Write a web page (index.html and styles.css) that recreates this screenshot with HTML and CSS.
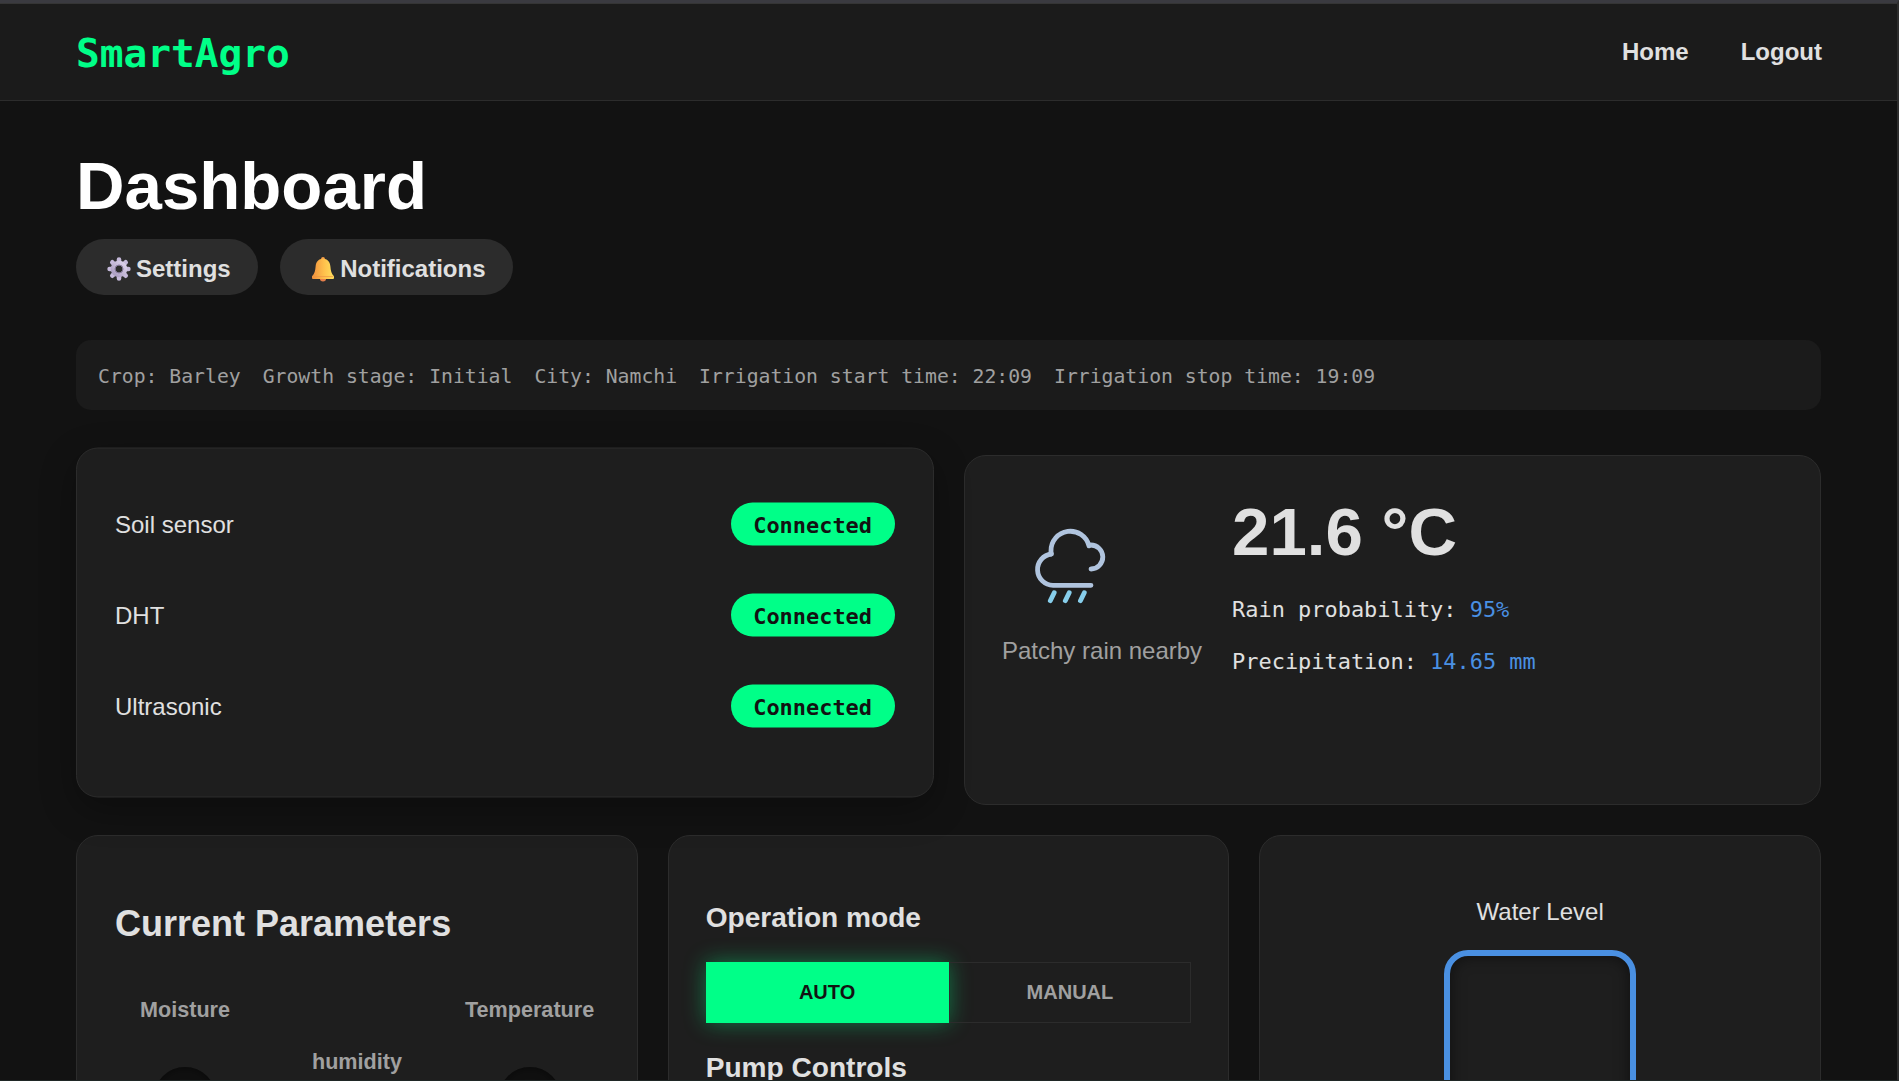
FILE: index.html
```html
<!DOCTYPE html>
<html lang="en">
<head>
<meta charset="utf-8">
<title>SmartAgro</title>
<link rel="stylesheet" href="styles.css">
</head>
<body>
<div class="page">
  <header class="navbar">
    <div class="logo">SmartAgro</div>
    <nav class="nav-links"><a>Home</a><a>Logout</a></nav>
  </header>
  <main class="content">
    <h1 class="title">Dashboard</h1>
    <div class="actions">
      <button class="pill-btn">
        <svg class="emoji" viewBox="0 0 24 26">
          <defs><linearGradient id="gear" x1="1" y1="0" x2="0" y2="1"><stop offset="0" stop-color="#ddd3ec"/><stop offset="1" stop-color="#a99bc0"/></linearGradient></defs>
          <g stroke="#c6badb" stroke-width="4.6" stroke-linecap="round">
            <path d="M12 3.6V7M12 19v3.4M2.600 13H6M18 13h3.400M5.300 6.300l2.600 2.600M16.100 17.100l2.600 2.600M18.700 6.300l-2.600 2.600M7.900 17.100l-2.600 2.600"/>
          </g>
          <circle cx="12" cy="13" r="6" fill="none" stroke="url(#gear)" stroke-width="4.6"/>
          <circle cx="12" cy="13" r="4" fill="none" stroke="#85799a" stroke-width="1"/>
        </svg>Settings</button>
      <button class="pill-btn">
        <svg class="emoji" viewBox="0 0 24 26">
          <defs><linearGradient id="bell" x1="0" y1="0" x2="1" y2="0"><stop offset="0" stop-color="#f08f3c"/><stop offset=".55" stop-color="#ffc14c"/><stop offset="1" stop-color="#ffe05e"/></linearGradient></defs>
          <circle cx="12" cy="2.8" r="1.9" fill="#f6a04a"/>
          <ellipse cx="12" cy="23" rx="3" ry="2.4" fill="#e77f4b"/>
          <path d="M12 2.8c-4.600 0-7 3.300-7.400 7.600-.4 4.300-.9 7.200-3.600 9.800v1.500c0 .8.500 1.300 1.300 1.300h19.400c.8 0 1.300-.5 1.300-1.300v-1.500c-2.700-2.600-3.200-5.500-3.600-9.800C19 6.100 16.600 2.800 12 2.800z" fill="url(#bell)"/>
          <path d="M1.500 20.600h21" stroke="#ee9645" stroke-width="1" opacity=".75"/>
        </svg>Notifications</button>
    </div>
    <div class="info-bar">
      <span>Crop: Barley</span><span>Growth stage: Initial</span><span>City: Namchi</span><span>Irrigation start time: 22:09</span><span>Irrigation stop time: 19:09</span>
    </div>
    <div class="row two">
      <section class="card sensors">
        <div class="sensor"><span>Soil sensor</span><span class="status">Connected</span></div>
        <div class="sensor"><span>DHT</span><span class="status">Connected</span></div>
        <div class="sensor"><span>Ultrasonic</span><span class="status">Connected</span></div>
      </section>
      <section class="card weather">
        <div class="sky">
          <svg class="cloud" viewBox="0 0 100 100" fill="none" stroke-linecap="round" stroke-linejoin="round">
            <g stroke="#b0c4de" stroke-width="4.8">
              <path d="M71 68.300H33A15.700 15.700 0 0 1 31.500 37"/>
              <path d="M31 37V34A19.300 19.300 0 0 1 69 28.800"/>
              <path d="M70.600 28A12 12 0 0 1 71 52"/>
            </g>
            <path stroke="#87ceeb" stroke-width="4.800" d="M34.200 75.700l-3.900 8M49.200 75.700l-3.900 8M64.300 75.700l-3.900 8"/>
          </svg>
          <div class="sky-text">Patchy rain nearby</div>
        </div>
        <div class="readings">
          <div class="temp">21.6 °C</div>
          <div class="reading">Rain probability: <span class="value">95%</span></div>
          <div class="reading">Precipitation: <span class="value">14.65 mm</span></div>
        </div>
      </section>
    </div>
    <div class="row three">
      <section class="card params">
        <h2>Current Parameters</h2>
        <div class="gauges">
          <div class="gauge"><span>Moisture</span><div class="dial"></div></div>
          <div class="gauge mid"><span>humidity</span><div class="dial"></div></div>
          <div class="gauge"><span>Temperature</span><div class="dial"></div></div>
        </div>
      </section>
      <section class="card controls">
        <h3>Operation mode</h3>
        <div class="modes"><button class="mode active">AUTO</button><button class="mode">MANUAL</button></div>
        <h3>Pump Controls</h3>
      </section>
      <section class="card water">
        <div class="water-label">Water Level</div>
        <div class="tank"></div>
      </section>
    </div>
  </main>
</div>
</body>
</html>
```
FILE: styles.css
```css
* { box-sizing: border-box; }
html { background: #121212; }
body {
  margin: 0;
  height: 1081px;
  overflow: hidden;
  background: #121212;
  color: #e0e0e0;
  font: 24px/28px "Liberation Sans", Arial, sans-serif;
  border-top: 3px solid #3a3a40;
  border-right: 2px solid #2d2d2d;
  border-bottom: 1px solid #1f2725;
}
.page { height: 1077px; overflow: hidden; border-top: 1px solid #353535; }
button { font-family: inherit; margin: 0; }
h1, h2, h3 { margin: 0; }

.navbar {
  display: flex;
  align-items: center;
  justify-content: space-between;
  height: 97px;
  padding: 0 75px 0 76px;
  background: #1b1b1b;
  border-bottom: 1px solid #2c2c2c;
}
.logo {
  font: bold 39.470px/46px "DejaVu Sans Mono", monospace;
  color: #00ff88;
  padding-top: 2px;
}
.nav-links { display: flex; gap: 52px; font-weight: bold; }

.content { padding: 46px 76px 0; }
.title { font-size: 67.2px; line-height: 77px; color: #fff; }
.actions { display: flex; gap: 22px; margin-top: 15px; }
.pill-btn {
  display: flex;
  align-items: center;
  gap: 5px;
  height: 56px;
  padding: 3px 27.500px 0 31px;
  border: 0;
  border-radius: 28px;
  background: #2c2c2c;
  color: #e0e0e0;
  font-size: 24px;
  font-weight: bold;
}
.emoji { width: 24px; height: 26px; fill: none; }

.info-bar {
  display: flex;
  align-items: center;
  gap: 22px;
  height: 70px;
  margin-top: 45px;
  padding: 4px 22px 0;
  border-radius: 15px;
  background: #1b1b1b;
  color: #a0a0a0;
  font: 19.760px/26px "DejaVu Sans Mono", monospace;
}

.row { display: grid; gap: 30px; }
.two { grid-template-columns: 1fr 1fr; margin-top: 45px; }
.three { grid-template-columns: 1fr 1fr 1fr; margin-top: 30px; }
.card {
  padding: 37px;
  border: 1px solid #2c2c2c;
  border-radius: 22px;
  background: #1e1e1e;
}
.two .card { height: 350px; }
.three .card { height: 420px; }

.sensors {
  padding: 30px 38px;
  transform: translateY(-7.5px);
  box-shadow: 0 12px 36px rgba(0, 0, 0, 0.3);
}
.sensor { display: flex; align-items: center; justify-content: space-between; height: 91px; }
.status {
  height: 43.500px;
  padding: 2px 22.500px 0;
  border-radius: 22px;
  background: #00ff88;
  color: #121212;
  font: bold 21.930px/41px "DejaVu Sans Mono", monospace;
}

.weather { display: flex; gap: 30px; padding-left: 37.500px; }
.cloud { display: block; width: 100px; height: 100px; margin: 24px 0 0 18px; }
.sky-text { margin-top: 20px; line-height: 28px; color: #a0a0a0; }
.temp { font-size: 67.2px; line-height: 78px; font-weight: bold; margin-bottom: 13px; }
.reading { font: 21.930px/52px "DejaVu Sans Mono", monospace; }
.value { color: #4a90e2; }

.params { padding: 67px 37px 0 38px; }
.params h2 { font-size: 36px; line-height: 42px; }
.gauges { display: flex; padding-left: 25px; margin-top: 52px; }
.gauge {
  display: flex;
  flex-direction: column;
  align-items: center;
  gap: 44px;
  color: #a0a0a0;
  font-size: 21.6px;
  line-height: 26px;
  font-weight: bold;
}
.mid { padding-top: 52px; margin: 0 63px 0 82px; }
.dial {
  width: 62px;
  height: 62px;
  border-radius: 50%;
  background: #101010;
  box-shadow: inset 0 0 10px rgba(0, 0, 0, 0.5);
}

.controls { padding-top: 66px; }
.controls h3 { font-size: 28.080px; line-height: 32px; }
.modes { display: flex; margin: 28px 0 29px; }
.mode {
  flex: 1;
  height: 61px;
  padding: 0 0 1px;
  border: 1px solid #2c2c2c;
  background: transparent;
  color: #a0a0a0;
  font-size: 20px;
  font-weight: bold;
}
.mode.active {
  border-color: #00ff88;
  background: #00ff88;
  color: #121212;
  box-shadow: 0 0 22px rgba(0, 255, 136, 0.4);
}

.water { display: flex; flex-direction: column; align-items: center; padding-top: 62px; }
.water-label { line-height: 28px; }
.tank {
  width: 192px;
  height: 260px;
  margin-top: 24px;
  border: 6px solid #4a90e2;
  border-radius: 24px;
  box-shadow: inset 0 0 15px rgba(0, 0, 0, 0.5);
}
```
